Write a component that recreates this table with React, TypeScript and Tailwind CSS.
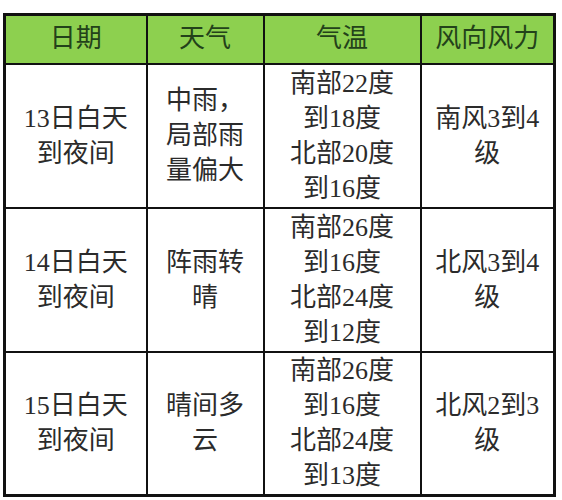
import React from "react";

const rows = [
  {
    date: ["13日白天", "到夜间"],
    weather: ["中雨，", "局部雨", "量偏大"],
    temp: ["南部22度", "到18度", "北部20度", "到16度"],
    wind: ["南风3到4", "级"],
  },
  {
    date: ["14日白天", "到夜间"],
    weather: ["阵雨转", "晴"],
    temp: ["南部26度", "到16度", "北部24度", "到12度"],
    wind: ["北风3到4", "级"],
  },
  {
    date: ["15日白天", "到夜间"],
    weather: ["晴间多", "云"],
    temp: ["南部26度", "到16度", "北部24度", "到13度"],
    wind: ["北风2到3", "级"],
  },
];

function Lines({ lines }: { lines: string[] }) {
  return (
    <div className="flex flex-col items-center">
      {lines.map((l, i) => (
        <div key={i} className="leading-[35px] whitespace-nowrap">
          {l}
        </div>
      ))}
    </div>
  );
}

const cell =
  "border-2 border-[#111] p-0 align-middle font-['Liberation_Serif','Noto_Sans_CJK_SC',serif]";

export default function App() {
  return (
    <div className="w-[562px] h-[500px] bg-white pt-[13px] pl-[3px] font-['Liberation_Serif','Noto_Sans_CJK_SC',serif]">
      <table className="table-fixed border-collapse border-[3px] border-[#111] text-[26px] text-[#2b2b2b] font-['Liberation_Serif','Noto_Sans_CJK_SC',serif]">
        <colgroup>
          <col className="w-[142px]" />
          <col className="w-[117px]" />
          <col className="w-[157px]" />
          <col className="w-[134px]" />
        </colgroup>
        <thead>
          <tr className="h-[49px] bg-[#8dd04f] text-[#23421a]">
            {["日期", "天气", "气温", "风向风力"].map((h) => (
              <th key={h} className={cell + " font-normal text-center leading-[40px]"}>
                {h}
              </th>
            ))}
          </tr>
        </thead>
        <tbody>
          {rows.map((r, i) => (
            <tr key={i} className="h-[144px]">
              <td className={cell}>
                <Lines lines={r.date} />
              </td>
              <td className={cell}>
                <Lines lines={r.weather} />
              </td>
              <td className={cell}>
                <Lines lines={r.temp} />
              </td>
              <td className={cell}>
                <Lines lines={r.wind} />
              </td>
            </tr>
          ))}
        </tbody>
      </table>
    </div>
  );
}
